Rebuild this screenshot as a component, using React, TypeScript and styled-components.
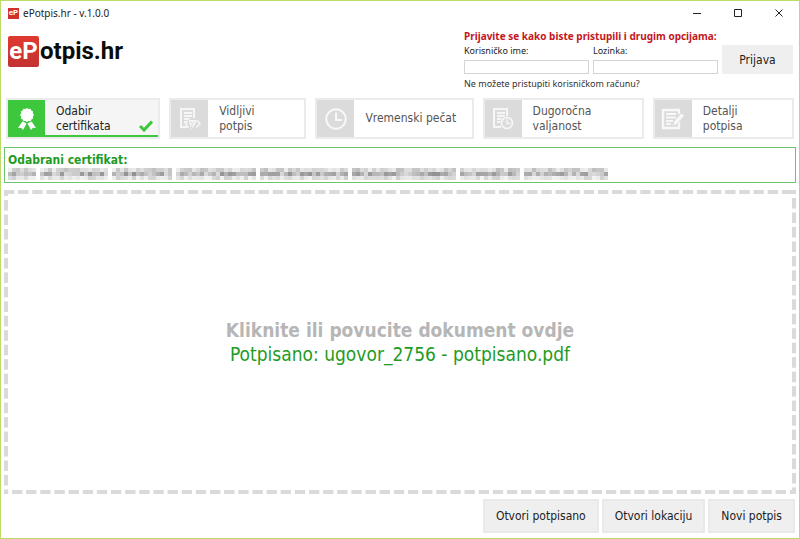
import React from "react";
import styled, { createGlobalStyle, css } from "styled-components";

const ui = `"DejaVu Sans Condensed", "Noto Sans", sans-serif`;
const dash = "#dadada";

const Global = createGlobalStyle`
  *, *::before, *::after { box-sizing: border-box; }
  body { margin: 0; background: #fff; color: #222; font-family: ${ui}; font-size: 12px; }
  button, input { font: inherit; color: inherit; }
  h1, p { margin: 0; }
`;

const Window = styled.div`
  min-height: 100vh;
  display: flex;
  flex-direction: column;
  border: 1px solid #bcdb6b;
  background: #fff;
`;

const TitleBar = styled.header`
  display: flex;
  align-items: center;
  height: 24px;
  padding-left: 7px;
  gap: 4px;
  font: 10px/14px "Noto Sans", sans-serif;
`;

const AppMark = styled.span`
  display: grid;
  place-items: center;
  width: 11px;
  height: 11px;
  background: #d3302c;
  color: #fff;
  font: bold 8px/10px Roboto, sans-serif;
`;

const WindowControls = styled.div`
  display: flex;
  margin-left: auto;
`;

const WindowButton = styled.button`
  display: grid;
  place-items: center;
  width: 41px;
  height: 24px;
  padding: 0;
  border: 0;
  background: none;
`;

const Top = styled.div`
  display: flex;
  justify-content: space-between;
  align-items: flex-start;
  padding: 4px 6px 8px 7px;
`;

const Logo = styled.h1`
  display: flex;
  align-items: center;
  margin-top: 7px;
  font: bold 24px/31px Roboto, sans-serif;
  color: #0c0c0c;
`;

const LogoTile = styled.span`
  display: grid;
  place-items: center;
  width: 31px;
  height: 31px;
  margin-right: 1px;
  border-radius: 2px;
  background: linear-gradient(#e0392f, #c23232);
  color: #fff;
`;

const Login = styled.form`
  display: grid;
  grid-template-columns: 125px 125px 71px;
  column-gap: 4px;
  font-family: "Noto Sans", sans-serif;
  font-size: 9px;
  line-height: 12px;
`;

const LoginTitle = styled.p`
  grid-column: 1 / -1;
  height: 16px;
  font-size: 10px;
  line-height: 14px;
  font-weight: bold;
  color: #c4161c;
`;

const Field = styled.label`
  display: flex;
  flex-direction: column;
  gap: 3px;
`;

const TextInput = styled.input`
  width: 100%;
  height: 14px;
  padding: 0 2px;
  border: 1px solid #d4d4d4;
  background: #fff;
  outline: none;
`;

const LoginButton = styled.button`
  height: 29px;
  padding: 0;
  border: 0;
  background: #efefef;
  font-family: ${ui};
  font-size: 12px;
`;

const Help = styled.a`
  grid-column: 1 / -1;
  margin-top: 4px;
  color: #333;
  text-decoration: none;
`;

const Steps = styled.nav`
  display: grid;
  grid-template-columns: 154fr 137fr 158fr 161fr 141fr;
  gap: 9px;
  padding: 0 5px;
`;

const StepButton = styled.button<{ $active?: boolean }>`
  display: flex;
  align-items: stretch;
  height: 41px;
  padding: 0;
  border: 2px solid #ebebeb;
  background: #fff;
  color: #555;
  text-align: left;
  line-height: 15px;
  ${(p) =>
    p.$active &&
    css`
      background: linear-gradient(#3cc73c, #3cc73c) bottom / 100% 2px no-repeat #f5f5f5;
      color: #222;
    `}
`;

const StepIcon = styled.span<{ $active?: boolean }>`
  display: grid;
  place-items: center;
  flex: none;
  width: 37px;
  background: ${(p) => (p.$active ? "#3cc73c" : "#dbdbdb")};
`;

const StepText = styled.span`
  align-self: center;
  flex: 1;
  padding-left: 11px;
  white-space: pre-line;
`;

const Tick = styled.svg`
  align-self: flex-end;
  margin: 0 5px 5px 0;
`;

const Certificate = styled.section`
  margin: 8px 3px 0;
  height: 36px;
  padding: 4px 3px 3px;
  border: 1px solid #6fc36f;
`;

const CertificateTitle = styled.p`
  font-weight: bold;
  line-height: 16px;
  color: #1f9b1f;
`;

const Mosaic = styled.svg`
  display: block;
`;

const DropZone = styled.button`
  flex: 1;
  display: flex;
  flex-direction: column;
  align-items: center;
  justify-content: center;
  min-height: 200px;
  margin: 7px 3px 0;
  padding: 0;
  border: 0;
  background-color: #fff;
  background-image:
    linear-gradient(90deg, ${dash} 75%, transparent 75%),
    linear-gradient(90deg, ${dash} 75%, transparent 75%),
    linear-gradient(${dash} 75%, transparent 75%),
    linear-gradient(${dash} 75%, transparent 75%);
  background-repeat: repeat-x, repeat-x, repeat-y, repeat-y;
  background-size:
    calc(100% / 56) 4px,
    calc(100% / 56) 4px,
    4px calc(100% / 21),
    4px calc(100% / 21);
  background-position: 0 0, 8px 100%, 0 10px, 100% 8px;
`;

const DropText = styled.span<{ $title?: boolean }>`
  font-size: 19px;
  line-height: 24px;
  font-weight: ${(p) => (p.$title ? "bold" : "normal")};
  color: ${(p) => (p.$title ? "#b6b6b6" : "#1f9b1f")};
`;

const Footer = styled.footer`
  display: flex;
  justify-content: flex-end;
  gap: 3px;
  padding: 5px 4px;
`;

const FooterButton = styled.button`
  height: 34px;
  padding: 0 11px;
  border: 2px solid #e9e9e9;
  background: #efefef;
`;

const Ribbon = () => (
  <svg width="20" height="24" viewBox="0 0 20 24" fill="#fff" aria-hidden="true">
    <path d="M10 1l1.600 1 1.900-.2.900 1.600 1.600.900-.100 1.900L17 8l-1.100 1.600.100 1.900-1.600.900-.900 1.700-1.900-.2L10 15l-1.600-1.100-1.900.2-.900-1.700L4 11.500l.100-1.900L3 8l1.100-1.800L4 4.300l1.600-.900.900-1.600 1.900.2z" />
    <path d="M5.500 14.300l4 2.100-3.400 6.600-2-2.200-3.100.3zM14.500 14.300l-4 2.100L14 23l2-2.200 3 .3z" />
  </svg>
);

const SheetLines = () => (
  <>
    <path d="M9 20H2V2h13v9" fill="none" stroke="#f6f6f6" strokeWidth="2" />
    <path d="M5 6h8M5 9h8M5 12h6M5 15h4" stroke="#f6f6f6" strokeWidth="2" />
  </>
);

const SignedSheet = () => (
  <svg width="22" height="24" viewBox="0 0 22 24" aria-hidden="true">
    <SheetLines />
    <path d="M6.500 17l3.500-5h8l3.500 5-3.500 3-4 3h-3z" fill="#dbdbdb" />
    <path d="M9.500 13h8.500l-2.500 5-3.500 5-1-5z" fill="#f6f6f6" />
    <path d="M8.500 14l-2 3 3 3.500M18.500 13.500L21 17l-4 3.500" fill="none" stroke="#f6f6f6" strokeWidth="1.500" />
    <path d="M12.300 21.500l1-5M11 14.500l2.300 1.500 2.200-1.500" fill="none" stroke="#dbdbdb" />
  </svg>
);

const Clock = () => (
  <svg width="22" height="22" viewBox="0 0 22 22" fill="none" stroke="#f8f8f8" strokeWidth="2" aria-hidden="true">
    <circle cx="11" cy="11" r="9.700" />
    <path d="M11 4.500V12h6" />
  </svg>
);

const ClockSheet = () => (
  <svg width="22" height="24" viewBox="0 0 22 24" aria-hidden="true">
    <SheetLines />
    <circle cx="15" cy="16" r="7" fill="#dbdbdb" />
    <circle cx="15" cy="16" r="5.500" fill="none" stroke="#f6f6f6" strokeWidth="1.700" />
    <path d="M15 12v4.500h3.500" fill="none" stroke="#f6f6f6" strokeWidth="1.500" />
  </svg>
);

const EditSheet = () => (
  <svg width="24" height="22" viewBox="0 0 24 22" aria-hidden="true">
    <path d="M18 13v7H2V2h16v4" fill="none" stroke="#f8f8f8" strokeWidth="2.400" strokeLinejoin="round" />
    <path d="M5 6h10M5 9.500h10M5 13h7M5 16h5" stroke="#f8f8f8" strokeWidth="2" />
    <path d="M12.500 14L20 5l3.500 2.500-7.700 9-4 1.500z" fill="#f8f8f8" stroke="#dbdbdb" strokeWidth=".8" />
  </svg>
);

const steps = [
  { text: "Odabir\ncertifikata", icon: <Ribbon />, active: true },
  { text: "Vidljivi\npotpis", icon: <SignedSheet /> },
  { text: "Vremenski pečat", icon: <Clock /> },
  { text: "Dugoročna\nvaljanost", icon: <ClockSheet /> },
  { text: "Detalji\npotpisa", icon: <EditSheet /> },
];

// Redacted certificate line: word lengths in 4px tiles, one blank tile between words.
const words = [7, 17, 15, 20, 22, 26, 15, 21];
// Lightness range (base, spread) for the top, middle and bottom tile of a column.
const rows = [
  [190, 50],
  [145, 75],
  [208, 36],
];

const tiles: { x: number; y: number; fill: string }[] = [];
let seed = 7;
let column = 0;
for (const length of words) {
  for (let i = 0; i < length; i++) {
    rows.forEach(([base, spread], y) => {
      seed = (seed * 16807) % 2147483647;
      const v = base + (seed % spread);
      tiles.push({ x: (column + i) * 4, y: y * 4, fill: `rgb(${v},${v},${v})` });
    });
  }
  column += length + 1;
}

const Redacted = () => (
  <Mosaic width="600" height="12" shapeRendering="crispEdges" aria-hidden="true">
    {tiles.map((t) => (
      <rect key={`${t.x}-${t.y}`} x={t.x} y={t.y} width="4" height="4" fill={t.fill} />
    ))}
  </Mosaic>
);

export default function App() {
  return (
    <Window>
      <Global />
      <TitleBar>
        <AppMark>eP</AppMark>
        <span>ePotpis.hr - v.1.0.0</span>
        <WindowControls>
          <WindowButton aria-label="Minimize">
            <svg width="8" height="8" stroke="#222"><path d="M0 4.500h8" /></svg>
          </WindowButton>
          <WindowButton aria-label="Maximize">
            <svg width="8" height="8" stroke="#222" fill="none"><path d="M.5.500h7v7h-7z" /></svg>
          </WindowButton>
          <WindowButton aria-label="Close">
            <svg width="8" height="8" stroke="#222"><path d="M.5.500l7 7M7.500.500l-7 7" /></svg>
          </WindowButton>
        </WindowControls>
      </TitleBar>
      <Top>
        <Logo><LogoTile>eP</LogoTile>otpis.hr</Logo>
        <Login onSubmit={(e) => e.preventDefault()}>
          <LoginTitle>Prijavite se kako biste pristupili i drugim opcijama:</LoginTitle>
          <Field>Korisničko ime:<TextInput type="text" /></Field>
          <Field>Lozinka:<TextInput type="password" /></Field>
          <LoginButton>Prijava</LoginButton>
          <Help href="#">Ne možete pristupiti korisničkom računu?</Help>
        </Login>
      </Top>
      <Steps>
        {steps.map((s) => (
          <StepButton key={s.text} $active={s.active}>
            <StepIcon $active={s.active}>{s.icon}</StepIcon>
            <StepText>{s.text}</StepText>
            {s.active && (
              <Tick width="14" height="12" viewBox="0 0 14 12" fill="none" stroke="#3cc73c" strokeWidth="3" aria-hidden="true">
                <path d="M1 6l4 4 8-8.500" />
              </Tick>
            )}
          </StepButton>
        ))}
      </Steps>
      <Certificate>
        <CertificateTitle>Odabrani certifikat:</CertificateTitle>
        <Redacted />
      </Certificate>
      <DropZone>
        <DropText $title>Kliknite ili povucite dokument ovdje</DropText>
        <DropText>Potpisano: ugovor_2756 - potpisano.pdf</DropText>
      </DropZone>
      <Footer>
        <FooterButton>Otvori potpisano</FooterButton>
        <FooterButton>Otvori lokaciju</FooterButton>
        <FooterButton>Novi potpis</FooterButton>
      </Footer>
    </Window>
  );
}
